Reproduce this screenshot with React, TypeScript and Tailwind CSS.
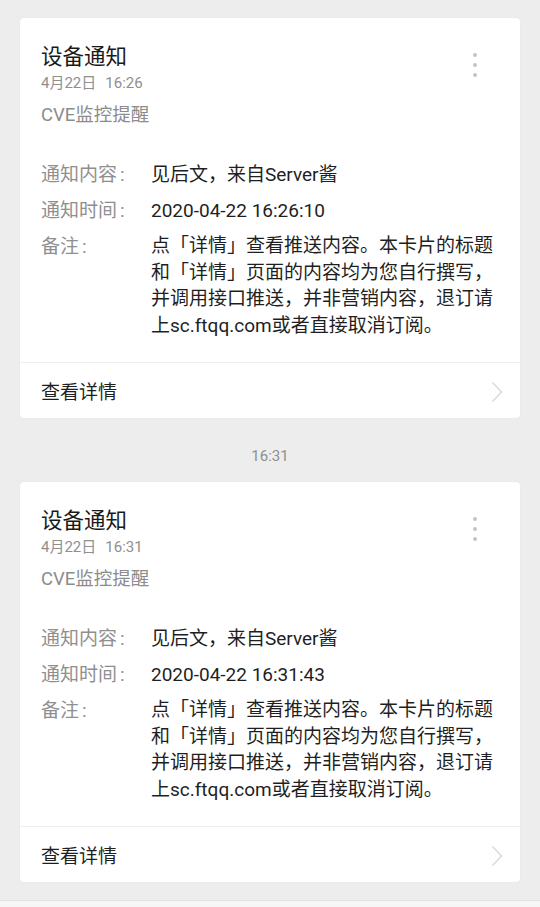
const FONT = "font-['Roboto','Noto_Sans_CJK_SC',sans-serif]";

interface Notice {
  date: string;
  time: string;
  sentAt: string;
}

const notices: Notice[] = [
  { date: '4月22日', time: '16:26', sentAt: '2020-04-22 16:26:10' },
  { date: '4月22日', time: '16:31', sentAt: '2020-04-22 16:31:43' },
];

// 备注文本按参考截图的换行拆开
const remarkLines = [
  '点「详情」查看推送内容。本卡片的标题',
  '和「详情」页面的内容均为您自行撰写，',
  '并调用接口推送，并非营销内容，退订请',
  '上sc.ftqq.com或者直接取消订阅。',
];

function MoreDots() {
  return (
    <div className="flex flex-col items-center gap-[6px] mt-[10px] mr-[43px]">
      <span className="w-[4px] h-[4px] rounded-full bg-[#c4c4c4]"></span>
      <span className="w-[4px] h-[4px] rounded-full bg-[#c4c4c4]"></span>
      <span className="w-[4px] h-[4px] rounded-full bg-[#c4c4c4]"></span>
    </div>
  );
}

function Chevron() {
  return (
    <svg width="12" height="22" viewBox="0 0 12 22" fill="none" className="mr-[17px] mt-[2px]">
      <polyline points="1.5,1.5 10.5,11 1.5,20.5" stroke="#d9d9d9" strokeWidth="1.4" strokeLinejoin="miter" />
    </svg>
  );
}

function NoticeCard({ notice }: { notice: Notice }) {
  return (
    <div className="mx-[20px] bg-white rounded-[4px] shadow-[0_0_2px_rgba(0,0,0,0.05)]">
      <div className="pt-[25px] pb-[23px] pl-[21px]">
        <div className="flex justify-between items-start">
          <div>
            <div className="text-[21.5px] leading-[28px] text-[#1a1a1a]">设备通知</div>
            <div className="mt-[2px] text-[15px] leading-[20px] text-[#8f8f8f]">
              {notice.date}
              <span className="ml-[9px]">{notice.time}</span>
            </div>
          </div>
          <MoreDots />
        </div>
        <div className="mt-[10px] text-[18.5px] leading-[24px] text-[#8c8c8c]">CVE监控提醒</div>

        <div className="mt-[34px] flex flex-col gap-[9px] text-[19px] leading-[27px]">
          <div className="flex">
            <div className="w-[110px] shrink-0 text-[#8f8f8f]">通知内容<span className="ml-[3px]">:</span></div>
            <div className="text-[#1f1f1f]">见后文，来自Server酱</div>
          </div>
          <div className="flex">
            <div className="w-[110px] shrink-0 text-[#8f8f8f]">通知时间<span className="ml-[3px]">:</span></div>
            <div className="text-[#1f1f1f]">{notice.sentAt}</div>
          </div>
          <div className="flex">
            <div className="w-[110px] shrink-0 text-[#8f8f8f]">备注<span className="ml-[3px]">:</span></div>
            <div className="text-[#1f1f1f] leading-[26.5px]">
              {remarkLines.map((line, i) => (
                <div key={i} className="whitespace-nowrap">{line}</div>
              ))}
            </div>
          </div>
        </div>
      </div>
      <div className="h-[56px] border-t border-[#efefef] flex items-center justify-between pl-[21px]">
        <span className="text-[19px] text-[#1f1f1f] mt-[5px]">查看详情</span>
        <Chevron />
      </div>
    </div>
  );
}

export default function App() {
  return (
    <div className={`${FONT} min-h-[907px] bg-[#ededed] pt-[18px] overflow-hidden`}>
      <NoticeCard notice={notices[0]} />
      <div className="pt-[29px] pb-[17px] text-center text-[15px] leading-[18px] text-[#8f8f8f]">
        {notices[1].time}
      </div>
      <NoticeCard notice={notices[1]} />
      <div className="mt-[18px] h-[40px] bg-[#f6f6f6] border-t border-[#e2e2e2]"></div>
    </div>
  );
}
